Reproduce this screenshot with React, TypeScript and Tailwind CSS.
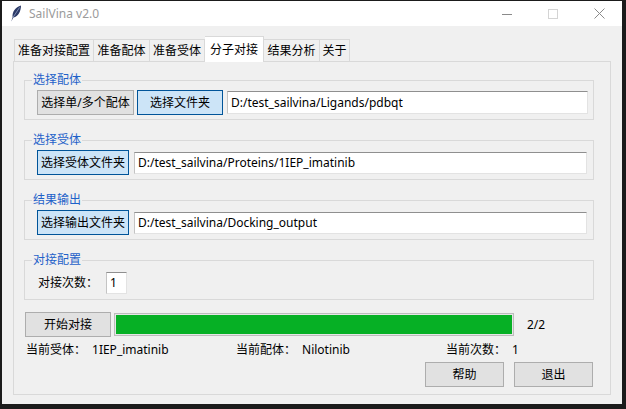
import React from "react";

const font = "font-['Noto_Sans','Noto_Sans_CJK_SC',sans-serif]";

function Btn({ w, blue, children }: { w: string; blue?: boolean; children: React.ReactNode }) {
  return (
    <div
      className={
        (blue ? "bg-[#cce4f7] border-[#005499] " : "bg-[#e1e1e1] border-[#adadad] ") +
        w +
        " h-[25px] border flex items-center justify-center text-[12px] leading-none text-black shrink-0"
      }
    >
      {children}
    </div>
  );
}

function Entry({ value, cls }: { value: string; cls: string }) {
  return (
    <div
      className={
        cls +
        " bg-white border border-[#e3e3e3] border-t-[#8f8f8f] border-l-[#c4c4c4] flex items-center pl-[3px] text-[12px] leading-none text-black overflow-hidden whitespace-nowrap"
      }
    >
      {value}
    </div>
  );
}

function Group({ title, children }: { title: string; children: React.ReactNode }) {
  return (
    <div className="w-[570px] h-[40px] border border-[#d9d9d9] flex flex-col">
      <div className="-mt-[9px] ml-[7px] h-[16px] w-fit px-px bg-[#f0f0f0] text-[12px] leading-[16px] text-[#1f62c9]">
        {title}
      </div>
      <div className="mt-[2px] flex items-center">{children}</div>
    </div>
  );
}

function Stat({ k, v, w }: { k: string; v: string; w?: string }) {
  return (
    <div className={(w ?? "") + " flex"}>
      <span>{k}</span>
      <span className="ml-[6px]">{v}</span>
    </div>
  );
}

const tabs = [
  { t: "准备对接配置", w: "w-[80px]" },
  { t: "准备配体", w: "w-[56px]" },
  { t: "准备受体", w: "w-[55px]" },
  { t: "分子对接", w: "w-[59px]", on: true },
  { t: "结果分析", w: "w-[56px]" },
  { t: "关于", w: "w-[30px]" },
];

export default function App() {
  return (
    <div className={font + " w-[626px] h-[409px] bg-[#1b1b1b] pt-px pl-[2px] overflow-hidden"}>
      <div className="w-[620px] h-[403px] bg-[#f0f0f0] flex flex-col">
        {/* title bar */}
        <div className="h-[25px] bg-white flex items-center shrink-0">
          <svg className="ml-[8px]" width="12" height="17" viewBox="0 0 12 17">
            <path d="M11 0.5 C5.5 2 2 7 2.6 12.2 L1.2 16.5 L3.4 12.6 C8.4 11.6 11 6 11 0.5Z" fill="#2b3966" />
            <path d="M9.6 2.4 L2.9 12.6" stroke="#9fb0d4" strokeWidth="0.7" />
          </svg>
          <span className="ml-[7px] text-[12px] text-[#9b9b9b]">SailVina v2.0</span>
          <div className="ml-auto flex h-full">
            <div className="w-[46px] flex items-center justify-center">
              <svg width="10" height="10" viewBox="0 0 10 10">
                <path d="M0 5.5 H10" stroke="#8a8a8a" strokeWidth="1" />
              </svg>
            </div>
            <div className="w-[46px] flex items-center justify-center">
              <svg width="10" height="10" viewBox="0 0 10 10">
                <rect x="0.5" y="0.5" width="9" height="9" fill="none" stroke="#d4d4d4" strokeWidth="1" />
              </svg>
            </div>
            <div className="w-[46px] flex items-center justify-center">
              <svg width="11" height="11" viewBox="0 0 11 11">
                <path d="M0.5 0.5 L10.5 10.5 M10.5 0.5 L0.5 10.5" stroke="#8a8a8a" strokeWidth="1" />
              </svg>
            </div>
          </div>
        </div>

        {/* notebook */}
        <div className="pt-[10px] px-[11px]">
          <div className="flex items-end h-[25px] ml-px">
            {tabs.map((tab, i) =>
              tab.on ? (
                <div
                  key={i}
                  className={tab.w + " h-[26px] -mb-px relative z-10 bg-white border-t border-r border-[#d9d9d9] flex items-center justify-center text-[12px] text-black"}
                >
                  {tab.t}
                </div>
              ) : (
                <div
                  key={i}
                  className={
                    tab.w +
                    (i === 0 ? " border-l" : "") +
                    " h-[22px] bg-[#f0f0f0] border-t border-r border-[#d9d9d9] flex items-center justify-center text-[12px] text-black"
                  }
                >
                  {tab.t}
                </div>
              )
            )}
          </div>

          <div className="h-[334px] border border-[#d9d9d9] bg-[#f0f0f0] pl-[10px] pt-[18px]">
            <div className="flex flex-col gap-[20px]">
              <Group title="选择配体">
                <div className="ml-[12px]">
                  <Btn w="w-[97px]">选择单/多个配体</Btn>
                </div>
                <div className="ml-[3px]">
                  <Btn w="w-[86px]" blue>
                    选择文件夹
                  </Btn>
                </div>
                <Entry value="D:/test_sailvina/Ligands/pdbqt" cls="ml-[4px] w-[361px] h-[23px]" />
              </Group>
              <Group title="选择受体">
                <div className="ml-[12px]">
                  <Btn w="w-[92px]" blue>
                    选择受体文件夹
                  </Btn>
                </div>
                <Entry value="D:/test_sailvina/Proteins/1IEP_imatinib" cls="ml-[5px] w-[453px] h-[22px]" />
              </Group>
              <Group title="结果输出">
                <div className="ml-[12px]">
                  <Btn w="w-[92px]" blue>
                    选择输出文件夹
                  </Btn>
                </div>
                <Entry value="D:/test_sailvina/Docking_output" cls="ml-[5px] w-[453px] h-[22px]" />
              </Group>
              <Group title="对接配置">
                <div className="ml-[13px] h-[25px] flex items-center text-[12px] text-black">对接次数：</div>
                <Entry value="1" cls="ml-[8px] w-[21px] h-[22px]" />
              </Group>
            </div>

            {/* progress row */}
            <div className="mt-[12px] flex items-center h-[25px]">
              <div className="ml-px">
                <Btn w="w-[86px]">开始对接</Btn>
              </div>
              <div className="ml-[3px] w-[400px] h-[23px] border border-[#bcbcbc] bg-[#e6e6e6] p-px">
                <div className="h-full w-full bg-[#06b025]" />
              </div>
              <span className="ml-[13px] text-[12px] text-black">2/2</span>
            </div>

            {/* status row */}
            <div className="mt-[5px] h-[16px] flex text-[12px] leading-[16px] text-black ml-[2px]">
              <Stat k="当前受体：" v="1IEP_imatinib" w="w-[210px]" />
              <Stat k="当前配体：" v="Nilotinib" w="w-[210px]" />
              <Stat k="当前次数：" v="1" />
            </div>

            {/* bottom buttons */}
            <div className="mt-[4px] flex ml-[401px] gap-[10px]">
              <Btn w="w-[79px]">帮助</Btn>
              <Btn w="w-[79px]">退出</Btn>
            </div>
          </div>
        </div>
      </div>
    </div>
  );
}
